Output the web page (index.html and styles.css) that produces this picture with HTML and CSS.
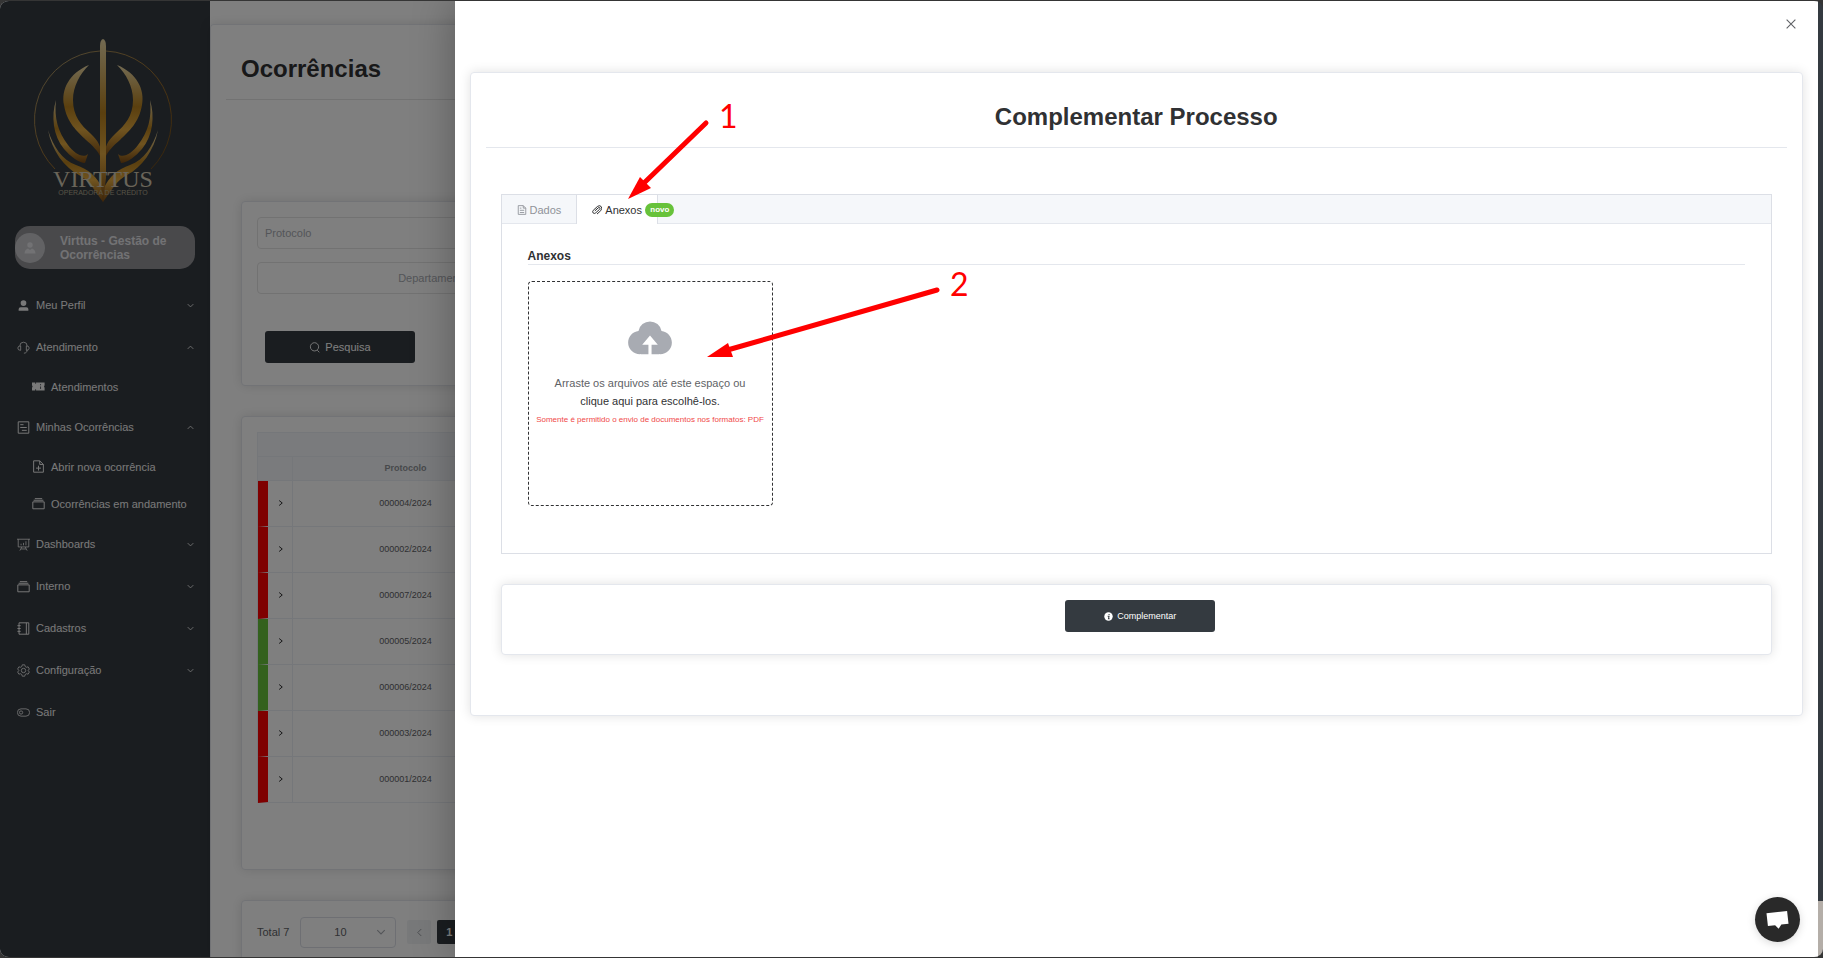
FILE: index.html
```
<!DOCTYPE html>
<html lang="pt-BR">
	<head>
		<meta charset="utf-8">
		<meta name="viewport" content="width=device-width, initial-scale=1.0">
		<title>Ocorrências</title>
		<link rel="stylesheet" href="styles.css">
	</head>

	<body>
		<!-- icons used more than once -->
		<svg class="sprite" width="0" height="0">
			<symbol id="down" viewBox="0 0 16 16"><path d="M3 5.500l5 5 5-5" fill="none" stroke="currentColor" stroke-width="1.500"/></symbol>
			<symbol id="up" viewBox="0 0 16 16"><path d="M3 10.500l5-5 5 5" fill="none" stroke="currentColor" stroke-width="1.500"/></symbol>
			<symbol id="right" viewBox="0 0 16 16"><path d="M5 4l5 4-5 4" fill="none" stroke="currentColor" stroke-width="1.600"/></symbol>
			<symbol id="left" viewBox="0 0 16 16"><path d="M10.500 3l-5 5 5 5" fill="none" stroke="currentColor" stroke-width="1.300"/></symbol>
			<symbol id="user" viewBox="0 0 1024 1024"><path fill="currentColor" d="M288 320a224 224 0 1 0 448 0 224 224 0 1 0-448 0zm544 608H160a32 32 0 0 1-32-32v-96a160 160 0 0 1 160-160h448a160 160 0 0 1 160 160v96a32 32 0 0 1-32 32z"/></symbol>
			<symbol id="files" viewBox="0 0 16 16"><g fill="none" stroke="currentColor" stroke-width="1.200"><path d="M1 6h14v8.500H1zM2 4h12M3.500 2h9"/></g></symbol>
		</svg>

		<div class="window">
			<div class="viewport">
				<div class="app">
					<aside class="sidebar">
						<svg class="logo" viewBox="0 0 140 170" role="img" aria-label="Virttus operadora de crédito">
							<defs>
								<linearGradient id="gold" x1="0" y1="0" x2="0" y2="1">
									<stop offset="0" stop-color="#e8d6a4"/>
									<stop offset=".45" stop-color="#b57f1e"/>
									<stop offset=".7" stop-color="#e0a840"/>
									<stop offset="1" stop-color="#7a4a14"/>
								</linearGradient>
								<linearGradient id="ring" x1="0" y1="0" x2="1" y2="1">
									<stop offset="0" stop-color="#a89a70"/>
									<stop offset=".6" stop-color="#9a6c28"/>
									<stop offset="1" stop-color="#6a4818"/>
								</linearGradient>
							</defs>
							<path d="M67 13A69 69 0 0 0 22 131M73 13A69 69 0 0 1 118 131" fill="none" stroke="url(#ring)"/>
							<g id="wing" fill="url(#gold)">
								<path d="M56 27C36 35 28 52 31 67C34 85 44 93 53 102C60 108 65 113 68 120C69 108 65 103 58 96C48 87 40 78 40 62C40 48 47 36 56 27z"/>
								<path d="M23 62C18 78 20 98 31 111C37 118 46 125 52 125L55 116C50 121 41 115 35 107C25 94 21 80 23 62z"/>
								<path d="M15 92C19 113 31 129 46 137C56 142 62 153 70 164V152C64 138 55 131 43 127C29 122 20 108 15 92z"/>
							</g>
							<use href="#wing" transform="matrix(-1 0 0 1 140 0)"/>
							<path d="M67 8Q67 2 70 1Q73 2 73 8V140L70 165L67 140z" fill="url(#gold)"/>
							<text x="70" y="149" class="logo-name">VIRTTUS</text>
							<text x="70" y="157" class="logo-sub">OPERADORA DE CRÉDITO</text>
						</svg>

						<div class="profile">
							<span class="avatar"><svg viewBox="0 0 12 12"><circle cx="6" cy="3" r="2.700" fill="currentColor"/><path d="M.500 11.500Q.700 7.500 4 6.500L6 8l2-1.500q3.300 1 3.500 5z" fill="currentColor"/></svg></span>
							<span class="profile-name">Virttus - Gestão de Ocorrências</span>
						</div>

						<nav class="menu">
							<a href="#" class="item"><svg><use href="#user"/></svg>Meu Perfil<svg class="caret"><use href="#down"/></svg></a>
							<a href="#" class="item"><svg viewBox="0 0 16 16"><g fill="none" stroke="currentColor"><path d="M3.500 6a4.500 4.500 0 0 1 9 0M12.500 11c0 2.500-1.500 4-4 4"/><path d="M4.500 6v5.500Q1 11.500 1 8.700 1 6 4.500 6zM11.500 6v5.500Q15 11.500 15 8.700 15 6 11.500 6z"/></g></svg>Atendimento<svg class="caret"><use href="#up"/></svg></a>
							<div class="submenu">
								<a href="#" class="item"><svg viewBox="0 0 16 16"><path fill="currentColor" d="M0 3h4v1.500h1V3h10.500v3.500Q14 8 15.500 9.500V13H5v-1.500H4V13H0V9.500Q1.500 8 0 6.500z"/><path d="M10.500 5v1.500M10.500 8v3" stroke="#343a40"/></svg>Atendimentos</a>
							</div>
							<a href="#" class="item"><svg viewBox="0 0 16 16"><path d="M1.500 1h13v14h-13zM4 4.500h4M4 8h8M6 11.500h6" fill="none" stroke="currentColor" stroke-width="1.200"/></svg>Minhas Ocorrências<svg class="caret"><use href="#up"/></svg></a>
							<div class="submenu">
								<a href="#" class="item"><svg viewBox="0 0 16 16"><path d="M2 1h7.500L14 5.500V15H2zM9.500 1v4.500H14M8 7v6M5 10h6" fill="none" stroke="currentColor" stroke-width="1.200"/></svg>Abrir nova ocorrência</a>
								<a href="#" class="item"><svg><use href="#files"/></svg>Ocorrências em andamento</a>
							</div>
							<a href="#" class="item"><svg viewBox="0 0 16 16"><path d="M0 1.500h16M1.500 1.500v9.500h13V1.500M5 9V7M8 9V6M11 9V4M6 11l-2.500 4.500M10 11l2.500 4.500M5 13.500h6" fill="none" stroke="currentColor"/></svg>Dashboards<svg class="caret"><use href="#down"/></svg></a>
							<a href="#" class="item"><svg><use href="#files"/></svg>Interno<svg class="caret"><use href="#down"/></svg></a>
							<a href="#" class="item"><svg viewBox="0 0 16 16"><path d="M2.500 1h12v14h-12zM11.500 1v14M.500 4.500h4M.500 8h4M.500 11.500h4" fill="none" stroke="currentColor" stroke-width="1.200"/></svg>Cadastros<svg class="caret"><use href="#down"/></svg></a>
							<a href="#" class="item"><svg viewBox="0 0 16 16"><g fill="none" stroke="currentColor"><path d="M6.500 1h3l.600 2.100 1.500.900 2.100-.500 1.500 2.600L13.700 8l1.500 1.900-1.500 2.600-2.100-.500-1.500.900L9.500 15h-3l-.600-2.100-1.500-.900-2.100.500-1.500-2.600L2.300 8 .800 6.100l1.500-2.600 2.100.500 1.500-.900z"/><circle cx="8" cy="8" r="2.700"/></g></svg>Configuração<svg class="caret"><use href="#down"/></svg></a>
							<a href="#" class="item"><svg viewBox="0 0 16 16"><g fill="none" stroke="currentColor"><rect x=".500" y="3.500" width="15" height="9" rx="4.500"/><circle cx="5" cy="8" r="2"/></g></svg>Sair</a>
						</nav>
					</aside>

					<main class="page">
						<h1 class="page-title">Ocorrências</h1>

						<section class="card filters">
							<form class="filter-grid">
								<input type="text" class="field" placeholder="Protocolo" aria-label="Protocolo">
								<select class="field" aria-label="Departamento"><option>Departamento</option></select>
							</form>
							<button type="button" class="btn"><svg viewBox="0 0 16 16"><path d="M14 7A6 6 0 1 1 2 7a6 6 0 0 1 12 0zM12 12l3 3" fill="none" stroke="currentColor" stroke-width="1.300"/></svg>Pesquisa</button>
						</section>

						<section class="card list">
							<table class="table">
								<colgroup>
									<col class="col-expand">
									<col>
								</colgroup>
								<thead>
									<tr><th colspan="2"></th></tr>
									<tr><th></th><th>Protocolo</th></tr>
								</thead>
								<tbody>
									<tr class="late"><td class="expand"><svg><use href="#right"/></svg></td><td>000004/2024</td></tr>
									<tr class="late"><td class="expand"><svg><use href="#right"/></svg></td><td>000002/2024</td></tr>
									<tr class="late"><td class="expand"><svg><use href="#right"/></svg></td><td>000007/2024</td></tr>
									<tr class="ok"><td class="expand"><svg><use href="#right"/></svg></td><td>000005/2024</td></tr>
									<tr class="ok"><td class="expand"><svg><use href="#right"/></svg></td><td>000006/2024</td></tr>
									<tr class="late"><td class="expand"><svg><use href="#right"/></svg></td><td>000003/2024</td></tr>
									<tr class="late"><td class="expand"><svg><use href="#right"/></svg></td><td>000001/2024</td></tr>
								</tbody>
							</table>
						</section>

						<section class="card pagination">
							<span>Total 7</span>
							<span class="page-size">
								<select aria-label="Itens por página"><option>10</option></select>
								<svg><use href="#down"/></svg>
							</span>
							<button type="button" class="prev" aria-label="Anterior"><svg><use href="#left"/></svg></button>
							<button type="button" class="current">1</button>
						</section>
					</main>
				</div>

				<div class="mask"></div>

				<div class="drawer" role="dialog" aria-labelledby="drawer-title">
					<header class="drawer-header">
						<button type="button" class="close" aria-label="Fechar"><svg viewBox="0 0 16 16"><path d="M3 3l10 10M13 3L3 13" stroke="currentColor" stroke-width="1.300"/></svg></button>
					</header>

					<div class="card process">
						<h2 class="process-title" id="drawer-title">Complementar Processo</h2>

						<div class="tabs">
							<div class="tab-bar" role="tablist">
								<button type="button" class="tab" role="tab"><svg viewBox="0 0 16 16"><path d="M2 1h8l4 4v10H2zM10 1v4h4M4.500 5H7M4.500 8.500h7M4.500 12h7" fill="none" stroke="currentColor" stroke-width="1.400"/></svg>Dados</button>
								<button type="button" class="tab active" role="tab" aria-selected="true"><svg viewBox="0 0 16 16"><path d="M4.500 9.500l5.500-5q1.500-1.300 2.500 0t-.500 2.500l-6 5.500q-2.500 2-4.200.200T2 8.500L8.500 2.500Q12-.300 14.500 2.300T14 9L8 14.500" fill="none" stroke="currentColor" stroke-width="1.600"/></svg>Anexos<span class="badge">novo</span></button>
							</div>
							<div class="tab-body">
								<h3 class="section-title">Anexos</h3>
								<button type="button" class="dropzone">
									<svg viewBox="0 0 1024 1024"><path fill="currentColor" d="M544 864V672h128L512 480 352 672h128v192H320v-1.600c-5.376.320-10.496 1.600-16 1.600A240 240 0 0 1 64 624c0-123.136 93.120-223.488 212.608-237.248A239.808 239.808 0 0 1 512 192a239.872 239.872 0 0 1 235.456 194.752c119.488 13.760 212.480 114.112 212.480 237.248a240 240 0 0 1-240 240c-5.376 0-10.560-1.280-16-1.600v1.600H544z"/></svg>
									<span>Arraste os arquivos até este espaço ou</span>
									<em>clique aqui para escolhê-los.</em>
									<small>Somente é permitido o envio de documentos nos formatos: PDF</small>
								</button>
							</div>
						</div>

						<div class="card actions">
							<button type="button" class="btn btn-small"><svg viewBox="0 0 16 16"><circle cx="8" cy="8" r="7.500" fill="currentColor"/><path d="M9 3.500v2M6.500 7.500H9l-1 4.500h2" fill="none" stroke="#343a40" stroke-width="1.800"/></svg>Complementar</button>
						</div>
					</div>
				</div>

				<button type="button" class="chat" aria-label="Abrir chat"><svg viewBox="0 0 24 20"><path d="M.500 3L22 0.500 23.500 14 16 14.800 13.200 19 9.500 15.500 2 16.300z" fill="#fff"/></svg></button>

				<svg class="note note-one" width="120" height="110">
					<path d="M82 27L20 87" stroke="red" stroke-width="5" stroke-linecap="round"/>
					<path d="M4 103L16 81L27 92z" fill="red"/>
					<text x="95" y="32">1</text>
				</svg>
				<svg class="note note-two" width="270" height="100">
					<path d="M233 25L20 86" stroke="red" stroke-width="5" stroke-linecap="round"/>
					<path d="M3 92L24 78L29 92z" fill="red"/>
					<text x="246" y="31">2</text>
				</svg>
			</div>

			<div class="scrollbar"><div class="thumb"></div></div>
		</div>
	</body>
</html>
```

FILE: styles.css
```
* {
	box-sizing: border-box;
}

body {
	margin: 0;
	background: #353535;
	font-family: "Liberation Sans", Arial, sans-serif;
	font-size: 11px;
	color: #303133;
}

button, input, select {
	font: inherit;
	color: inherit;
}

button {
	cursor: pointer;
}

.sprite {
	display: block;
}

.window {
	display: flex;
	height: 100vh;
	border: solid #353535;
	border-width: 1px 0;
	border-radius: 9px;
	overflow: hidden;
}

.viewport {
	position: relative;
	flex: 1;
	min-width: 0;
	overflow: hidden;
	background: #fff;
}

.scrollbar {
	display: flex;
	flex-direction: column;
	justify-content: flex-end;
	width: 5px;
	background: #343a40;
}

.thumb {
	height: 56px;
	background: #b4aea8;
}

.app {
	display: flex;
	height: 100%;
}

/* sidebar */
.sidebar {
	flex: none;
	width: 210px;
	background: #343a40;
	color: #fff;
}

.logo {
	display: block;
	width: 140px;
	height: 170px;
	margin: 37px 0 18px 33px;
}

.logo-name {
	font-family: "Liberation Serif", serif;
	font-size: 24px;
	text-anchor: middle;
	fill: #d5cbb4;
}

.logo-sub {
	font-size: 7px;
	text-anchor: middle;
	fill: #b0a88f;
}

.profile {
	display: flex;
	align-items: center;
	gap: 15px;
	height: 43px;
	margin: 0 15px 15px;
	border-radius: 15px;
	background: #929296;
	font-size: 12px;
	font-weight: bold;
	line-height: 14px;
	color: #e4e4e8;
}

.avatar {
	display: flex;
	align-items: center;
	justify-content: center;
	flex: none;
	width: 30px;
	height: 30px;
	border-radius: 50%;
	background: #c4c5c9;
}

.avatar svg {
	width: 12px;
	height: 12px;
}

.item {
	display: flex;
	align-items: center;
	gap: 6px;
	height: 42px;
	padding: 0 15px 0 17px;
	color: #f2f2f2;
	text-decoration: none;
}

.item svg {
	width: 13px;
	height: 13px;
}

.item .caret {
	width: 9px;
	height: 9px;
	margin-left: auto;
}

.submenu {
	padding-bottom: 1px;
}

.submenu .item {
	height: 37px;
	padding-left: 32px;
}

/* cards */
.card {
	border: 1px solid #e4e7ed;
	border-radius: 4px;
	background: #fff;
	box-shadow: 0 0 12px rgba(0, 0, 0, .12);
}

.page {
	flex: 1;
	min-width: 0;
	margin-top: 23px;
	border: 1px solid #e4e7ed;
	border-width: 1px 0 0 1px;
	border-radius: 4px 0 0 0;
	padding: 0 15px;
	box-shadow: 0 0 12px rgba(0, 0, 0, .12);
}

.page-title {
	margin: 0 0 101px;
	padding: 30px 15px 16px;
	border-bottom: 1px solid #e4e4e4;
	font-size: 24px;
	line-height: 28px;
}

.page .card {
	margin: 0 15px 30px;
	padding: 15px;
}

.page .filters {
	height: 185px;
}

.filter-grid {
	display: grid;
	grid-template-columns: 352px;
	gap: 13px;
	margin-bottom: 37px;
}

.field {
	width: 100%;
	height: 32px;
	border: 1px solid #e4e4e4;
	border-radius: 4px;
	padding: 0 7px;
	background: #fff;
	color: #a8abb2;
	appearance: none;
}

.field::placeholder {
	color: #a8abb2;
}

select.field {
	text-align: center;
	text-align-last: center;
}

.btn {
	display: inline-flex;
	align-items: center;
	justify-content: center;
	gap: 5px;
	width: 150px;
	height: 32px;
	margin-left: 8px;
	border: 0;
	border-radius: 3px;
	background: #343a40;
	color: #fff;
}

.btn svg {
	width: 11px;
	height: 11px;
}

.btn-small {
	gap: 4px;
	font-size: 9px;
}

.btn-small svg {
	width: 9px;
	height: 9px;
}

/* table */
.list {
	height: 454px;
}

.table {
	width: 262px;
	border-collapse: separate;
	border-spacing: 0;
	table-layout: fixed;
	border: 1px solid #ebeef5;
	border-width: 1px 0 0 1px;
	font-size: 9px;
	text-align: center;
}

.col-expand {
	width: 35px;
}

.table th {
	height: 24px;
	padding: 0 0 2px;
	border: solid #ebeef5;
	border-width: 0 1px 1px 0;
	background: #f5f7fa;
	color: #909399;
}

.table td {
	height: 46px;
	padding: 0 0 2px;
	border: solid #ebeef5;
	border-width: 0 1px 1px 0;
	color: #606266;
}

.table .expand {
	padding-left: 2px;
	border-left: 10px solid;
	color: #303133;
}

.table .late .expand {
	border-left-color: #f00;
}

.table .ok .expand {
	border-left-color: #67c23a;
}

.expand svg {
	display: block;
	width: 10px;
	height: 10px;
	margin: auto;
}

.pagination {
	display: flex;
	align-items: center;
	height: 64px;
	color: #606266;
}

.page-size {
	display: flex;
	align-items: center;
	width: 96px;
	height: 31px;
	margin: 0 11px;
	padding-right: 8px;
	border: 1px solid #dcdfe6;
	border-radius: 4px;
}

.page-size select {
	flex: 1;
	width: 100%;
	height: 100%;
	padding: 0 0 0 4px;
	border: 0;
	background: none;
	text-align-last: center;
	appearance: none;
}

.page-size svg {
	flex: none;
	width: 12px;
	height: 12px;
	color: #a8abb2;
}

.prev, .current {
	display: flex;
	align-items: center;
	justify-content: center;
	width: 24px;
	height: 24px;
	margin-right: 6px;
	padding: 0;
	border: 0;
	border-radius: 2px;
	background: #f0f2f5;
	color: #909399;
}

.prev svg {
	width: 11px;
	height: 11px;
}

.current {
	background: #343a40;
	color: #fff;
	font-weight: bold;
}

.mask {
	position: absolute;
	inset: 0;
	background: rgba(0, 0, 0, .5);
}

/* drawer */
.drawer {
	position: absolute;
	top: 0;
	right: 0;
	bottom: 0;
	width: 75%;
	padding: 0 15px;
	background: #fff;
	box-shadow: 0 0 40px rgba(0, 0, 0, .3);
}

.drawer-header {
	display: flex;
	justify-content: flex-end;
	height: 71px;
	padding: 16px 5px 0;
}

.close {
	width: 14px;
	height: 14px;
	padding: 0;
	border: 0;
	background: none;
	color: #606266;
}

.close svg {
	display: block;
	width: 14px;
	height: 14px;
}

.process {
	padding: 0 15px 60px;
}

.process-title {
	margin: 0 0 46px;
	padding: 30px 0 16px;
	border-bottom: 1px solid #e4e7ed;
	font-size: 24px;
	line-height: 28px;
	text-align: center;
}

.tabs {
	margin: 0 15px 30px;
	border: 1px solid #dcdfe6;
}

.tab-bar {
	display: flex;
	height: 29px;
	border-bottom: 1px solid #e4e7ed;
	background: #f5f7fa;
}

.tab {
	position: relative;
	display: flex;
	align-items: center;
	justify-content: center;
	gap: 3px;
	height: 29px;
	padding: 0 15px;
	border: solid #dcdfe6;
	border-width: 0 1px 0 0;
	background: none;
	color: #909399;
}

.tab svg {
	width: 10px;
	height: 10px;
}

.tab.active {
	background: #fff;
	color: #303133;
}

.badge {
	position: absolute;
	left: 68px;
	top: 8px;
	height: 14px;
	padding: 0 5px;
	border-radius: 7px;
	background: #67c23a;
	color: #fff;
	font-size: 8px;
	font-weight: bold;
	line-height: 14px;
}

.tab-body {
	padding: 25px 26px 47px;
}

.section-title {
	margin: 0 0 16px;
	border-bottom: 1px solid #e4e7ed;
	font-size: 12px;
	line-height: 15px;
}

.dropzone {
	display: flex;
	flex-direction: column;
	align-items: center;
	width: 245px;
	height: 225px;
	padding: 30px 0 0;
	border: 1px dashed #303133;
	border-radius: 4px;
	background: #fff;
	color: #606266;
	line-height: 18px;
}

.dropzone svg {
	width: 50px;
	height: 50px;
	margin-bottom: 12px;
	color: #a8abb2;
}

.dropzone em {
	color: #303133;
	font-style: normal;
}

.dropzone small {
	margin-top: 1px;
	color: #f04848;
	font-size: 8px;
}

.actions {
	margin: 0 15px;
	padding: 15px 15px 22px;
	text-align: center;
}

.actions .btn {
	vertical-align: top;
}

.chat {
	position: absolute;
	right: 18px;
	bottom: 15px;
	display: flex;
	align-items: center;
	justify-content: center;
	width: 45px;
	height: 45px;
	padding: 0;
	border: 0;
	border-radius: 50%;
	background: #292929;
	box-shadow: 0 2px 8px rgba(0, 0, 0, .15);
}

.chat svg {
	width: 23px;
	height: 20px;
}

/* numbered arrows over the drawer */
.note {
	position: absolute;
	pointer-events: none;
}

.note text {
	fill: red;
	font-family: Lato, sans-serif;
	font-size: 32px;
}

.note-one {
	left: 624px;
	top: 95px;
}

.note-two {
	left: 704px;
	top: 264px;
}
```
